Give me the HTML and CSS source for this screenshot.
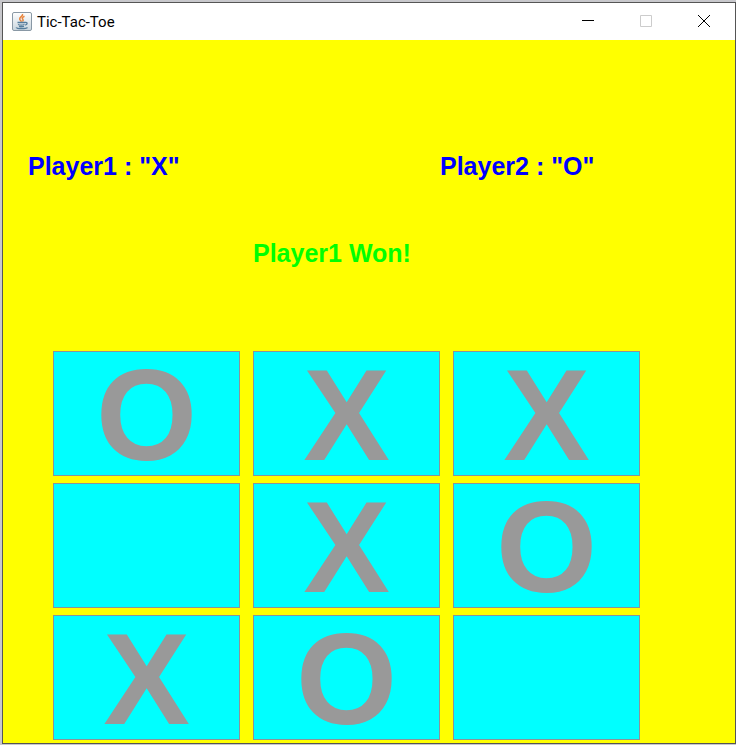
FILE: index.html
```html
<!DOCTYPE html>
<html lang="en">
<head>
<meta charset="utf-8">
<title>Tic-Tac-Toe</title>
<link rel="stylesheet" href="styles.css">
</head>
<body>
<main class="window">
  <header class="titlebar">
    <svg class="app-icon" viewBox="0 0 20 20" aria-hidden="true">
      <defs><linearGradient id="tile" x1="0" y1="0" x2="0" y2="1"><stop offset="0" stop-color="#fff"/><stop offset="1" stop-color="#c9d5dd"/></linearGradient></defs>
      <rect x=".5" y=".5" width="19" height="18" rx="1.5" fill="url(#tile)" stroke="#8998a5"/>
      <path d="M10.500 2c1 2-3 3-2.800 5 0 1.200 1.300 1.500 1.800 2.700M12.500 4.300c-2.200 1-2.700 2-1.700 3 .7.800.3 1.600-.3 2.200" fill="none" stroke="#e8843c" stroke-width="1.500"/>
      <path d="M5.500 10.500h7.500M6 12.500c1.700.7 4.800.7 6.500 0M7 14.300c1.200.5 3.500.5 5 0M13 10.500c2.800-.6 2.800 1.900.2 2.600M4.500 15.300c-1 1.700 9.500 1.700 11 .2" fill="none" stroke="#557c9b" stroke-width="1.300"/>
    </svg>
    <h1 class="title">Tic-Tac-Toe</h1>
    <div class="controls">
      <button class="control" type="button" aria-label="Minimize"><svg viewBox="0 0 12 12" aria-hidden="true"><path d="M0 5.500h12"/></svg></button>
      <button class="control" type="button" aria-label="Maximize" disabled><svg viewBox="0 0 12 12" aria-hidden="true"><path d="M.5.5h11v11H.5z"/></svg></button>
      <button class="control" type="button" aria-label="Close"><svg viewBox="0 0 12 12" aria-hidden="true"><path d="M0 0l12 12M12 0L0 12"/></svg></button>
    </div>
  </header>
  <section class="game">
    <div class="players">
      <p class="player">Player1 : "X"</p>
      <p class="player">Player2 : "O"</p>
    </div>
    <p class="result" role="status">Player1 Won!</p>
    <div class="board">
      <button class="cell" type="button" disabled>O</button>
      <button class="cell" type="button" disabled>X</button>
      <button class="cell" type="button" disabled>X</button>
      <button class="cell" type="button" disabled aria-label="Empty"></button>
      <button class="cell" type="button" disabled>X</button>
      <button class="cell" type="button" disabled>O</button>
      <button class="cell" type="button" disabled>X</button>
      <button class="cell" type="button" disabled>O</button>
      <button class="cell" type="button" disabled aria-label="Empty"></button>
    </div>
  </section>
</main>
</body>
</html>
```
FILE: styles.css
```css
* { box-sizing: border-box; }
body {
  margin: 0;
  min-height: 100vh;
  padding: 2px 0 1px 2px;
  display: flex;
  background: #c8c8cc;
  font-family: "Liberation Sans", Arial, sans-serif;
}
.window {
  flex: 1;
  display: flex;
  flex-direction: column;
  border: 1px solid #555;
  background: #ff0;
}
.titlebar {
  display: flex;
  align-items: center;
  height: 37px;
  padding-left: 9px;
  background: #fff;
}
.app-icon { width: 20px; height: 20px; }
.title {
  margin: 0 0 0 5px;
  font: 400 15px Roboto, "Noto Sans", sans-serif;
  color: #000;
}
.controls { display: flex; margin-left: auto; padding: 0 2px 2px 0; height: 100%; }
.control {
  width: 58px;
  padding: 0;
  border: 0;
  background: none;
  display: grid;
  place-items: center;
}
.control svg { width: 12px; height: 12px; fill: none; stroke: #000; }
.control:disabled svg { stroke: #ccc; }
.game {
  flex: 1;
  padding: 112px 0 3px;
  font-weight: 700;
  font-size: 25px;
  line-height: 28px;
}
.players {
  display: grid;
  grid-template-columns: 412px 1fr;
  padding-left: 25px;
  color: #00f;
}
.player, .result { margin: 0; }
.result { padding: 59px 0 0 250px; color: #0f0; }
.board {
  display: grid;
  grid-template-columns: repeat(3, 187px);
  grid-auto-rows: 125px;
  gap: 7px 13px;
  padding: 84px 0 0 50px;
}
.cell {
  padding: 4px 0 0;
  border: 1px solid #8a9499;
  border-radius: 0;
  background: #0ff;
  color: #999;
  font: 700 130px/115px "Liberation Sans", Arial, sans-serif;
}
```
